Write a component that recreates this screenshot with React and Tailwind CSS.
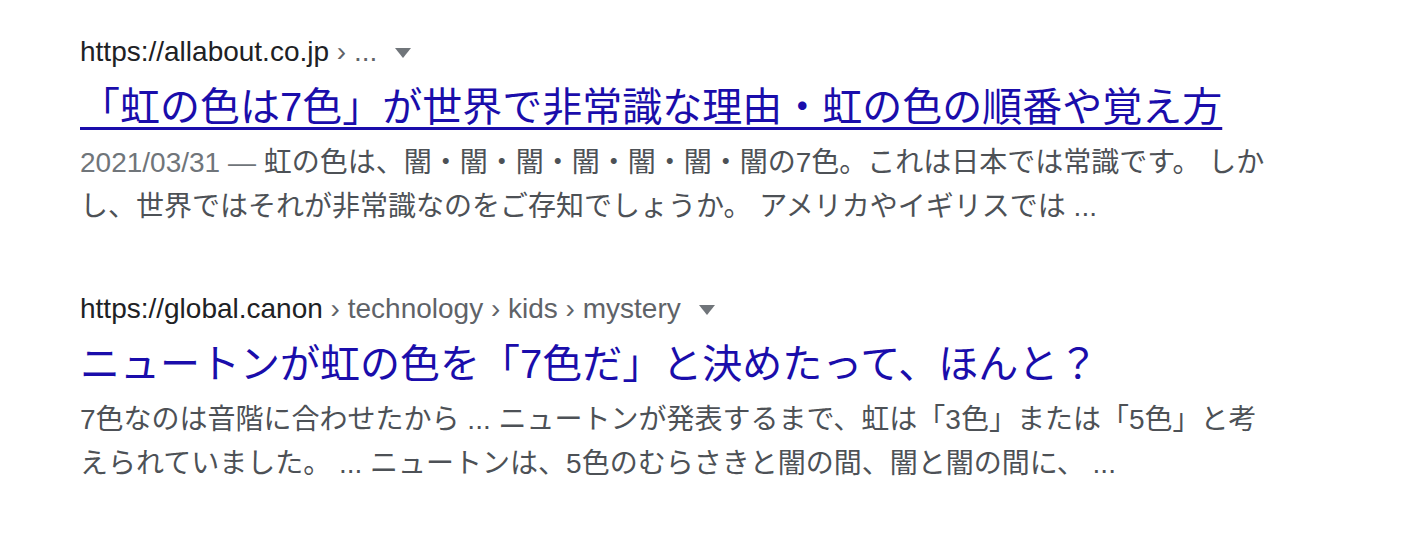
export default function App() {
  const font = { fontFamily: '"Liberation Sans", Arial, "Noto Sans CJK JP", sans-serif' };
  const Tri = () => (
    <span className="ml-[18px] inline-block h-0 w-0 border-x-[8px] border-t-[10px] border-x-transparent border-t-[#70757a] align-middle relative top-[-1px]" />
  );
  return (
    <div className="w-[1412px] h-[534px] bg-white pl-[80px] pt-[34px]" style={font}>
      {/* Result 1 */}
      <div>
        <div className="h-[36px] leading-[36px] text-[28px] whitespace-nowrap">
          <span className="text-[#202124]">https://allabout.co.jp</span>
          <span className="text-[#5f6368]"> › ...</span>
          <Tri />
        </div>
        <div className="pt-[11px] pb-[8px]">
          <a className="text-[40px] leading-[52px] text-[#1a0dab] underline decoration-[3px] underline-offset-[6px] whitespace-nowrap">
            「虹の色は7色」が世界で非常識な理由・虹の色の順番や覚え方
          </a>
        </div>
        <div className="text-[28px] leading-[44px] text-[#4d5156] whitespace-nowrap">
          <div>
            <span className="text-[#70757a]">2021/03/31 — </span>
            虹の色は、闇・闇・闇・闇・闇・闇・闇の7色。これは日本では常識です。 しか
          </div>
          <div>し、世界ではそれが非常識なのをご存知でしょうか。 アメリカやイギリスでは ...</div>
        </div>
      </div>

      {/* Result 2 */}
      <div className="mt-[62px]">
        <div className="h-[36px] leading-[36px] text-[28px] whitespace-nowrap">
          <span className="text-[#202124]">https://global.canon</span>
          <span className="text-[#5f6368]"> › technology › kids › mystery</span>
          <Tri />
        </div>
        <div className="pt-[11px] pb-[8px]">
          <a className="text-[40px] leading-[52px] text-[#1a0dab] whitespace-nowrap">
            ニュートンが虹の色を「7色だ」と決めたって、ほんと？
          </a>
        </div>
        <div className="text-[28px] leading-[44px] text-[#4d5156] whitespace-nowrap">
          <div>7色なのは音階に合わせたから ... ニュートンが発表するまで、虹は「3色」または「5色」と考</div>
          <div>えられていました。 ... ニュートンは、5色のむらさきと闇の間、闇と闇の間に、 ...</div>
        </div>
      </div>
    </div>
  );
}
